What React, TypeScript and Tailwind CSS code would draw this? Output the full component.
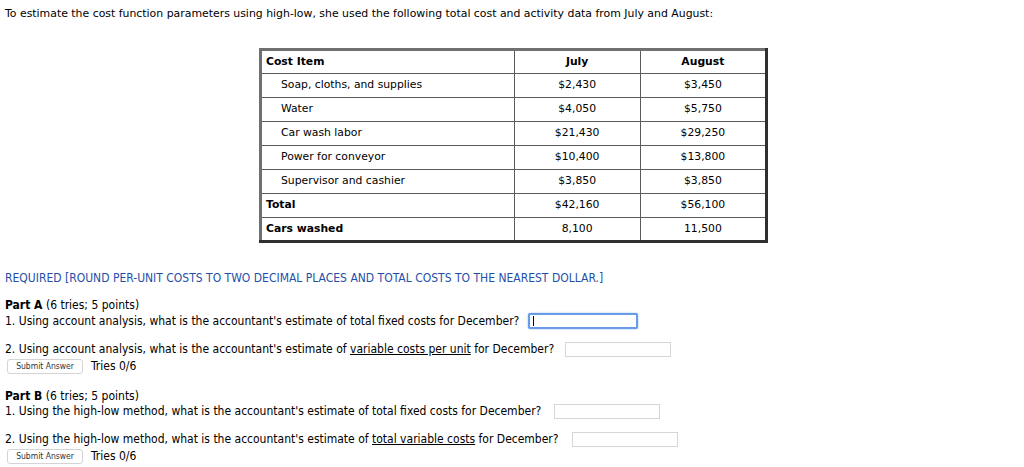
import React from 'react';

const rows = [
  { item: 'Soap, cloths, and supplies', july: '$2,430', aug: '$3,450', indent: true },
  { item: 'Water', july: '$4,050', aug: '$5,750', indent: true },
  { item: 'Car wash labor', july: '$21,430', aug: '$29,250', indent: true },
  { item: 'Power for conveyor', july: '$10,400', aug: '$13,800', indent: true },
  { item: 'Supervisor and cashier', july: '$3,850', aug: '$3,850', indent: true },
  { item: 'Total', july: '$42,160', aug: '$56,100', indent: false },
  { item: 'Cars washed', july: '8,100', aug: '11,500', indent: false },
];

const cell = 'border border-[#5a5a5a] h-[24px] p-0 align-middle';

const Answer: React.FC<{ width: string; focused?: boolean }> = ({ width, focused }) => (
  <span className="relative inline-block align-middle">
    <input
      type="text"
      readOnly
      className={
        focused
          ? `${width} h-[16px] bg-white border-2 border-[#6a9be6] rounded-[2px] shadow-[0_0_2px_#8ab4f8] outline-none`
          : `${width} h-[15px] bg-white border border-[#d6d6d6] outline-none`
      }
    />
    {focused && <span className="absolute left-[5px] top-[3px] w-px h-[10px] bg-black" />}
  </span>
);

const Submit: React.FC = () => (
  <div className="flex items-center gap-2 mt-[2px] ml-[2px]">
    <button className="h-[15px] w-[76px] bg-white border border-[#d4d4d4] rounded-[3px] text-[8.5px] leading-none text-[#333]">
      Submit Answer
    </button>
    <span className="text-[12px]">Tries 0/6</span>
  </div>
);

const App: React.FC = () => {
  return (
    <div className="w-[1024px] h-[467px] bg-white text-black overflow-hidden font-['DejaVu_Sans',Verdana,sans-serif]">
      <p className="pl-[5px] pt-[7px] text-[10.9px] leading-[14px]">
        To estimate the cost function parameters using high-low, she used the following total cost and activity data from July and August:
      </p>

      <table className="ml-[259px] mt-[27px] w-[509px] table-fixed border-collapse border-[3px] border-t-[#707070] border-l-[#707070] border-b-[#2f2f2f] border-r-[#2f2f2f] text-[10.8px]">
        <colgroup>
          <col className="w-[253px]" />
          <col className="w-[126px]" />
          <col className="w-[126px]" />
        </colgroup>
        <tbody>
          <tr>
            <td className={`${cell} pl-[4px] font-bold`}>Cost Item</td>
            <td className={`${cell} text-center font-bold`}>July</td>
            <td className={`${cell} text-center font-bold`}>August</td>
          </tr>
          {rows.map((r) => (
            <tr key={r.item}>
              <td className={`${cell} ${r.indent ? 'pl-[19px]' : 'pl-[4px] font-bold'}`}>{r.item}</td>
              <td className={`${cell} text-center`}>{r.july}</td>
              <td className={`${cell} text-center`}>{r.aug}</td>
            </tr>
          ))}
        </tbody>
      </table>

      <div className="pl-[5px] mt-[28px] text-[12px] leading-[15px] font-['DejaVu_Sans_Condensed','Liberation_Sans',sans-serif]">
        <p className="text-[#1f4fa8]">
          REQUIRED [ROUND PER-UNIT COSTS TO TWO DECIMAL PLACES AND TOTAL COSTS TO THE NEAREST DOLLAR.]
        </p>

        <p className="mt-[12px]">
          <span className="font-bold">Part A</span> (6 tries; 5 points)
        </p>
        <p className="flex items-center gap-[9px]">
          <span>1. Using account analysis, what is the accountant's estimate of total fixed costs for December?</span>
          <Answer width="w-[110px]" focused />
        </p>
        <p className="flex items-center gap-[11px] mt-[13px]">
          <span>
            2. Using account analysis, what is the accountant's estimate of <span className="underline">variable costs per unit</span> for December?
          </span>
          <Answer width="w-[106px]" />
        </p>
        <Submit />

        <p className="mt-[15px]">
          <span className="font-bold">Part B</span> (6 tries; 5 points)
        </p>
        <p className="flex items-center gap-[13px]">
          <span>1. Using the high-low method, what is the accountant's estimate of total fixed costs for December?</span>
          <Answer width="w-[106px]" />
        </p>
        <p className="flex items-center gap-[13px] mt-[13px]">
          <span>
            2. Using the high-low method, what is the accountant's estimate of <span className="underline">total variable costs</span> for December?
          </span>
          <Answer width="w-[106px]" />
        </p>
        <Submit />
      </div>
    </div>
  );
};

export default App;
